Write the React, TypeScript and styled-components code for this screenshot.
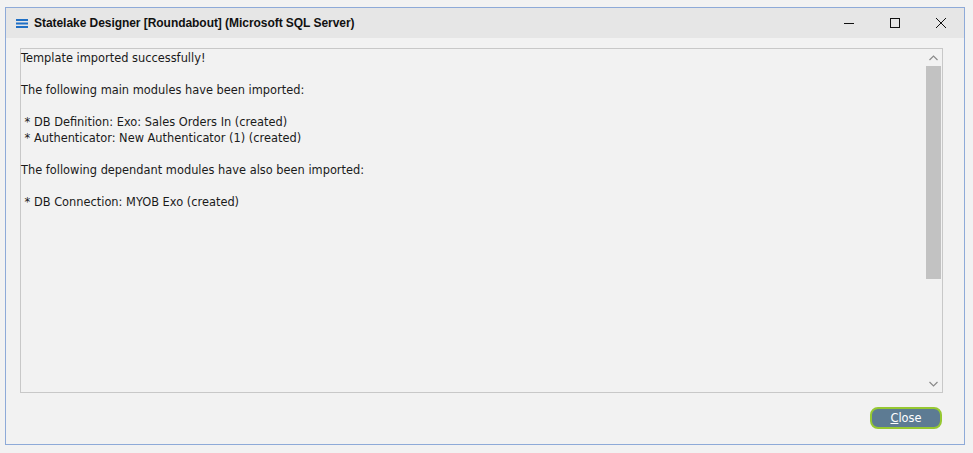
import React from 'react';
import styled, { createGlobalStyle } from 'styled-components';

const GlobalStyle = createGlobalStyle`
  html, body {
    margin: 0;
    padding: 0;
    background: #f2f2f2;
  }
  body {
    font-family: 'Liberation Sans', Arial, sans-serif;
  }
`;

const Window = styled.div`
  box-sizing: border-box;
  margin: 7px 0 0 5px;
  width: 960px;
  height: 438px;
  border: 1px solid #8eaad8;
  background: #f2f2f2;
  display: flex;
  flex-direction: column;
`;

const TitleBar = styled.div`
  height: 30px;
  background: #e6e6e6;
  display: flex;
  align-items: center;
  padding-left: 10px;
`;

const AppIcon = styled.svg`
  width: 12px;
  height: 9px;
  margin-right: 6px;
  flex-shrink: 0;
`;

const Title = styled.div`
  font-family: 'Liberation Sans', Arial, sans-serif;
  font-weight: bold;
  font-size: 12px;
  letter-spacing: -0.05px;
  color: #111;
  flex: 1;
`;

const WinButton = styled.div`
  width: 46px;
  height: 30px;
  display: flex;
  align-items: center;
  justify-content: center;
`;

const Body = styled.div`
  flex: 1;
  display: flex;
  flex-direction: column;
  padding: 10px 21px 0 14px;
`;

const LogBox = styled.div`
  box-sizing: border-box;
  height: 345px;
  border: 1px solid #c8c8c8;
  display: flex;
`;

const LogText = styled.div`
  flex: 1;
  padding: 1px 0 0 0;
  font-family: 'DejaVu Sans', Verdana, sans-serif;
  font-size: 11.4px;
  line-height: 16px;
  color: #1a1a1a;
  white-space: pre;
`;

const ScrollTrack = styled.div`
  width: 16px;
  display: flex;
  flex-direction: column;
  align-items: center;
  margin-right: 1px;
`;

const ArrowCell = styled.div`
  height: 17px;
  width: 16px;
  display: flex;
  align-items: center;
  justify-content: center;
`;

const Thumb = styled.div`
  width: 15px;
  height: 213px;
  background: #c2c2c2;
`;

const Spacer = styled.div`
  flex: 1;
`;

const Footer = styled.div`
  display: flex;
  justify-content: flex-end;
  padding: 14px 1px 0 0;
`;

const CloseButton = styled.button`
  box-sizing: border-box;
  width: 72px;
  height: 22px;
  border: 2px solid #96c832;
  border-radius: 8px;
  background: #5d7b93;
  color: #fff;
  font-family: 'DejaVu Sans', Verdana, sans-serif;
  font-size: 11.4px;
  padding: 0;
  display: flex;
  align-items: center;
  justify-content: center;

  u {
    text-decoration: underline;
  }
`;

const lines = [
  'Template imported successfully!',
  '',
  'The following main modules have been imported:',
  '',
  ' * DB Definition: Exo: Sales Orders In (created)',
  ' * Authenticator: New Authenticator (1) (created)',
  '',
  'The following dependant modules have also been imported:',
  '',
  ' * DB Connection: MYOB Exo (created)',
];

const Chevron = ({ up }: { up?: boolean }) => (
  <svg width="9" height="6" viewBox="0 0 9 6">
    <path
      d={up ? 'M0.5 5 L4.5 1 L8.5 5' : 'M0.5 1 L4.5 5 L8.5 1'}
      fill="none"
      stroke="#8a8a8a"
      strokeWidth="1.2"
    />
  </svg>
);

export default function App() {
  return (
    <>
      <GlobalStyle />
      <Window>
        <TitleBar>
          <AppIcon viewBox="0 0 12 9">
            <rect x="0" y="0" width="12" height="2" fill="#1f6fc5" />
            <rect x="0" y="3.5" width="12" height="2" fill="#1f6fc5" />
            <rect x="0" y="7" width="12" height="2" fill="#1f6fc5" />
          </AppIcon>
          <Title>Statelake Designer [Roundabout] (Microsoft SQL Server)</Title>
          <WinButton>
            <svg width="10" height="10" viewBox="0 0 10 10">
              <path d="M0 5.5 H10" stroke="#111" strokeWidth="1" />
            </svg>
          </WinButton>
          <WinButton>
            <svg width="10" height="10" viewBox="0 0 10 10">
              <rect x="0.5" y="0.5" width="9" height="9" fill="none" stroke="#111" strokeWidth="1" />
            </svg>
          </WinButton>
          <WinButton>
            <svg width="10" height="10" viewBox="0 0 10 10">
              <path d="M0 0 L10 10 M10 0 L0 10" stroke="#111" strokeWidth="1" />
            </svg>
          </WinButton>
        </TitleBar>
        <Body>
          <LogBox>
            <LogText>{lines.join('\n')}</LogText>
            <ScrollTrack>
              <ArrowCell>
                <Chevron up />
              </ArrowCell>
              <Thumb />
              <Spacer />
              <ArrowCell>
                <Chevron />
              </ArrowCell>
            </ScrollTrack>
          </LogBox>
          <Footer>
            <CloseButton>
              <span>
                <u>C</u>lose
              </span>
            </CloseButton>
          </Footer>
        </Body>
      </Window>
    </>
  );
}
